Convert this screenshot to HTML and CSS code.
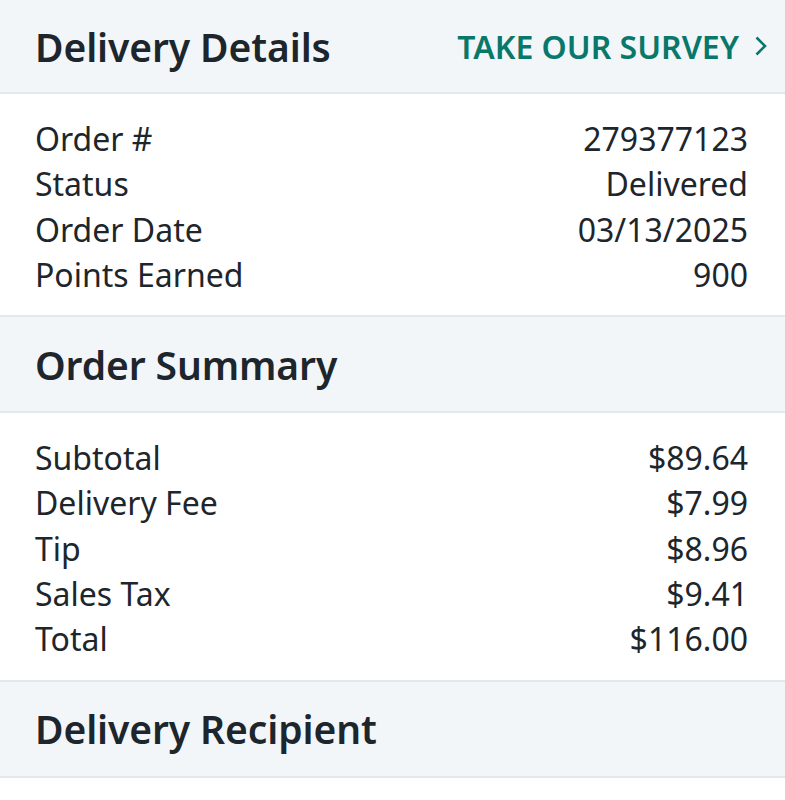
FILE: index.html
```html
<!DOCTYPE html>
<html lang="en">
  <head>
    <meta charset="UTF-8" />
    <meta name="viewport" content="width=device-width, initial-scale=1.0" />
    <title>Delivery Details</title>
    <link rel="stylesheet" href="styles.css">
  </head>
  <body>
    <div class="band band-first">
      <h2>Delivery Details</h2>
      <a href="#" class="survey">TAKE OUR SURVEY
        <svg class="chevron" width="14" height="22" viewBox="0 0 14 22">
          <path d="M2.5 2.5 L11 11 L2.5 19.5" fill="none" stroke="currentColor" stroke-width="2.6" />
        </svg>
      </a>
    </div>
    <div class="rows">
      <div class="row"><span>Order #</span><span>279377123</span></div>
      <div class="row"><span>Status</span><span>Delivered</span></div>
      <div class="row"><span>Order Date</span><span>03/13/2025</span></div>
      <div class="row"><span>Points Earned</span><span>900</span></div>
    </div>
    <div class="band">
      <h2>Order Summary</h2>
    </div>
    <div class="rows">
      <div class="row"><span>Subtotal</span><span>$89.64</span></div>
      <div class="row"><span>Delivery Fee</span><span>$7.99</span></div>
      <div class="row"><span>Tip</span><span>$8.96</span></div>
      <div class="row"><span>Sales Tax</span><span>$9.41</span></div>
      <div class="row"><span>Total</span><span>$116.00</span></div>
    </div>
    <div class="band">
      <h2>Delivery Recipient</h2>
    </div>
  </body>
</html>
```

FILE: styles.css
```css
* {
  margin: 0;
  padding: 0;
  box-sizing: border-box;
}

body {
  font-family: "Noto Sans", sans-serif;
  background: #ffffff;
  color: #1d262c;
}

.band {
  height: 98px;
  padding: 0 17px 0 35px;
  display: flex;
  justify-content: space-between;
  align-items: center;
  background: #f3f6f9;
  border-top: 2px solid #e3e8ec;
  border-bottom: 2px solid #e3e8ec;
}

.band-first {
  height: 94px;
  border-top: none;
}

h2 {
  font-size: 39px;
  font-weight: 600;
  letter-spacing: -0.1px;
}

.survey {
  display: flex;
  align-items: center;
  gap: 15px;
  color: #08786a;
  text-decoration: none;
  font-size: 32px;
  font-weight: 600;
}

.rows {
  padding: 22px 37px 18px 35px;
}

.row {
  display: flex;
  justify-content: space-between;
  font-size: 32px;
  line-height: 45.3px;
}
```
